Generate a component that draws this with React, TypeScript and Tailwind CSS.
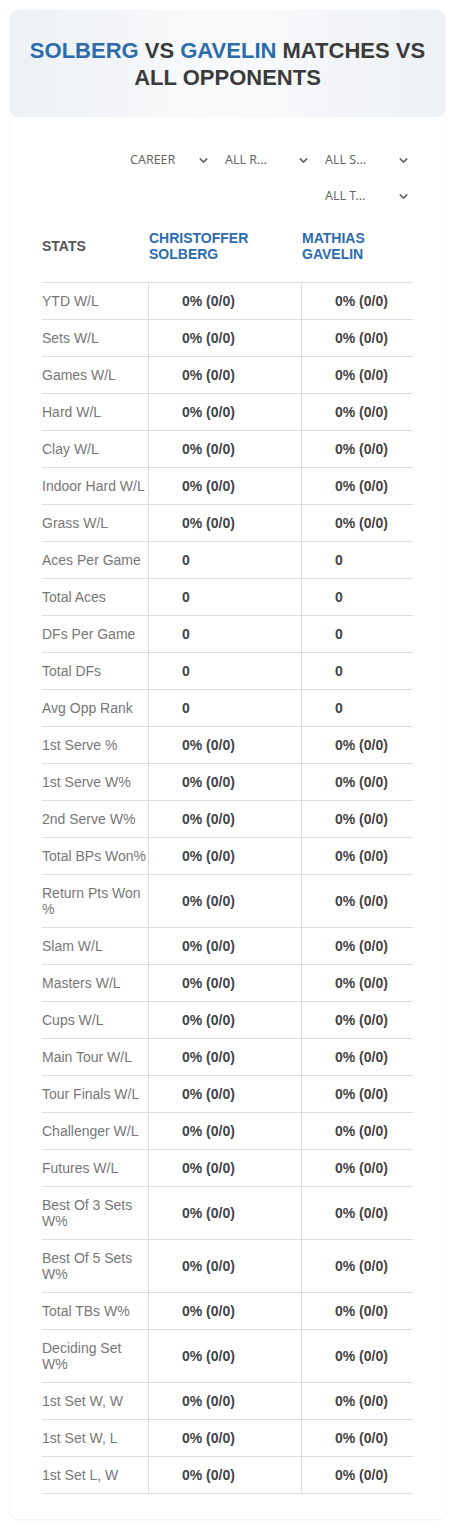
import React from "react";
import { ChevronDown } from "lucide-react";

const PCT = "0% (0/0)";

const rows: [string, string][] = [
  ["YTD W/L", PCT],
  ["Sets W/L", PCT],
  ["Games W/L", PCT],
  ["Hard W/L", PCT],
  ["Clay W/L", PCT],
  ["Indoor Hard W/L", PCT],
  ["Grass W/L", PCT],
  ["Aces Per Game", "0"],
  ["Total Aces", "0"],
  ["DFs Per Game", "0"],
  ["Total DFs", "0"],
  ["Avg Opp Rank", "0"],
  ["1st Serve %", PCT],
  ["1st Serve W%", PCT],
  ["2nd Serve W%", PCT],
  ["Total BPs Won%", PCT],
  ["Return Pts Won %", PCT],
  ["Slam W/L", PCT],
  ["Masters W/L", PCT],
  ["Cups W/L", PCT],
  ["Main Tour W/L", PCT],
  ["Tour Finals W/L", PCT],
  ["Challenger W/L", PCT],
  ["Futures W/L", PCT],
  ["Best Of 3 Sets W%", PCT],
  ["Best Of 5 Sets W%", PCT],
  ["Total TBs W%", PCT],
  ["Deciding Set W%", PCT],
  ["1st Set W, W", PCT],
  ["1st Set W, L", PCT],
  ["1st Set L, W", PCT],
];

function FilterSelect({ label, first }: { label: string; first?: boolean }) {
  return (
    <div
      className={
        first
          ? "w-[95px] h-[30px] flex items-center justify-between pl-[12px] pr-[3px] text-[12.5px] text-[#666] font-[family-name:'Noto_Sans',sans-serif]"
          : "w-[95px] h-[30px] flex items-center justify-between pl-[7px] pr-[3px] text-[12.5px] text-[#666] font-[family-name:'Noto_Sans',sans-serif]"
      }
    >
      <span>{label}</span>
      <ChevronDown className="w-[13px] h-[13px] text-[#666]" strokeWidth={3} />
    </div>
  );
}

export default function App() {
  return (
    <div className="bg-white min-h-[1528px] pt-[10px] px-[10px] font-[family-name:'Liberation_Sans',Arial,sans-serif]">
      <div className="rounded-lg bg-white shadow-[0_1px_2px_rgba(0,0,0,0.08)] pb-[25px]">
        {/* header */}
        <div className="rounded-lg bg-gradient-to-r from-[#edf1f5] via-[#f9fafb] to-[#edf1f6] h-[107px] flex items-center justify-center px-4">
          <h1 className="text-center text-[22px] leading-[27px] font-bold text-[#3b3b3b] uppercase">
            <span className="text-[#2b6cad]">Solberg</span> vs{" "}
            <span className="text-[#2b6cad]">Gavelin</span> matches vs all opponents
          </h1>
        </div>

        <div className="px-[32px]">
          {/* filters */}
          <div className="mt-[28px] flex flex-wrap justify-end gap-x-[5px] gap-y-[6px]">
            <FilterSelect label="CAREER" first />
            <FilterSelect label="ALL R…" />
            <FilterSelect label="ALL S…" />
            <FilterSelect label="ALL T…" />
          </div>

          {/* table */}
          <div className="mt-[11px] w-[371px] text-[14px] leading-4">
            <div className="grid grid-cols-[106px_153px_112px] border-b border-[#ddd] font-bold">
              <div className="pt-[8px] pb-[20px] flex items-center text-[#555]">STATS</div>
              <div className="pt-[8px] pb-[20px] pl-px text-[#2b6cad]">
                CHRISTOFFER
                <br />
                SOLBERG
              </div>
              <div className="pt-[8px] pb-[20px] pl-px text-[#2b6cad]">
                MATHIAS
                <br />
                GAVELIN
              </div>
            </div>
            {rows.map(([label, value]) => (
              <div
                key={label}
                className="grid grid-cols-[106px_153px_112px] border-b border-[#ddd]"
              >
                <div className="py-[10px] text-[#777]">{label}</div>
                <div className="py-[10px] pl-[33px] border-l border-[#ddd] flex items-center font-bold text-[#444]">
                  {value}
                </div>
                <div className="py-[10px] pl-[33px] border-l border-[#ddd] flex items-center font-bold text-[#444]">
                  {value}
                </div>
              </div>
            ))}
          </div>
        </div>
      </div>
    </div>
  );
}
